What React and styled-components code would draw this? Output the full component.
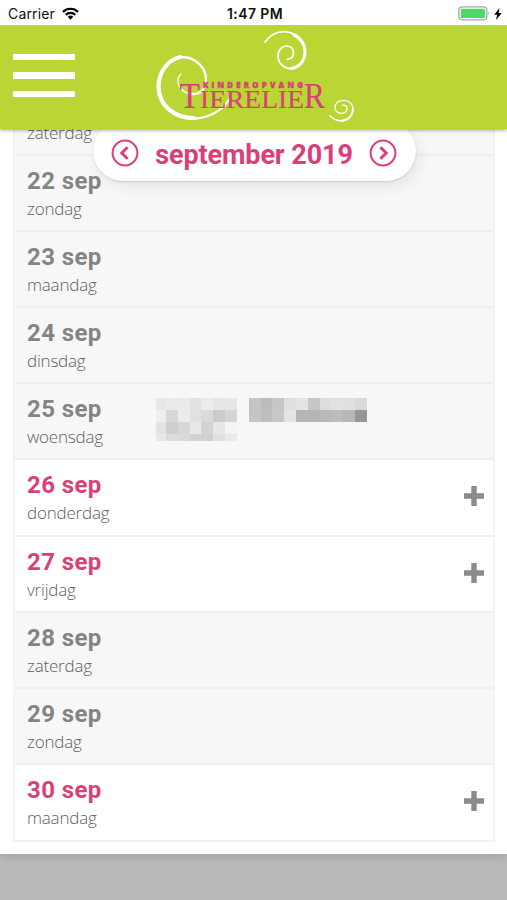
import styled, { createGlobalStyle } from 'styled-components';

const GlobalStyle = createGlobalStyle`
    * {
        box-sizing: border-box;
    }
    body {
        margin: 0;
        background-color: #bababa;
        font-family: "Open Sans", sans-serif;
    }
`

const Container = styled.div`
    width: 507px;
    height: 900px;
    overflow: hidden;
    display: flex;
    flex-direction: column;
    background-color: #bababa;
`

const StatusBar = styled.div`
    height: 25px;
    flex: none;
    display: grid;
    grid-template-columns: 1fr auto 1fr;
    align-items: center;
    padding: 2px 5px 0 8px;
    background-color: white;
    color: #111;
    font-family: Inter, sans-serif;
    font-size: 14px;
    z-index: 3;
`
const Carrier = styled.div`
    display: flex;
    align-items: center;
    gap: 7px;
    letter-spacing: 0.15px;
`
const Time = styled.div`
    font-weight: 600;
    letter-spacing: 0.4px;
`
const Power = styled.div`
    display: flex;
    align-items: center;
    justify-content: flex-end;
    gap: 4px;
`

const Header = styled.header`
    height: 104px;
    flex: none;
    display: flex;
    background-color: #b9d635;
    box-shadow: 0 1px 4px rgba(0, 0, 0, 0.4);
    z-index: 2;
`
const MenuButton = styled.button`
    width: 62px;
    margin: 29px 0 0 13px;
    padding: 0;
    border: none;
    background: none;
    display: flex;
    flex-direction: column;
    gap: 12px;
`
const MenuLine = styled.span`
    width: 61.5px;
    height: 6.4px;
    background-color: white;
`
const Logo = styled.svg`
    margin-left: 75px;
`

const Main = styled.main`
    height: 725px;
    flex: none;
    position: relative;
    display: flex;
    flex-direction: column;
    justify-content: flex-end;
    padding: 0 12px 12px 13px;
    background-color: white;
    box-shadow: 0 2px 10px rgba(0, 0, 0, 0.16);
`
const MonthPicker = styled.div`
    position: absolute;
    top: -8px;
    left: 93px;
    width: 323px;
    height: 60px;
    padding: 3px 19px 0 18px;
    display: flex;
    align-items: center;
    justify-content: space-between;
    border-radius: 30px;
    background-color: white;
    box-shadow: 0 1px 2px rgba(0, 0, 0, 0.12), 4px 6px 14px rgba(0, 0, 0, 0.07);
    z-index: 1;
`
const Month = styled.h1`
    margin: 4px 0 0;
    color: #db3f78;
    font-family: Roboto, sans-serif;
    font-size: 27px;
    font-weight: 700;
    line-height: 32px;
    letter-spacing: -0.1px;
    white-space: nowrap;
`

const Days = styled.div`
    flex: none;
    border: 2px solid #f3f3f3;
    border-top: none;
`
const Day = styled.div`
    height: ${props => props.$open ? "76.6px" : "76px"};
    display: flex;
    align-items: flex-start;
    padding: 11px 9px 0 12px;
    border-top: 2px solid #efefef;
    background-color: ${props => props.$open ? "white" : "#f7f7f7"};
`
const DayInfo = styled.div`
    width: 129px;
`
const DayDate = styled.div`
    color: ${props => props.$open ? "#db3f78" : "#848484"};
    font-family: Roboto, sans-serif;
    font-size: 24px;
    font-weight: 700;
    line-height: 28px;
    letter-spacing: 0.4px;
`
const DayName = styled.div`
    margin-top: 2px;
    color: #606060;
    font-size: 17px;
    font-weight: 300;
    line-height: 24px;
    letter-spacing: -0.2px;
`
const AddIcon = styled.svg`
    margin: 15px 0 0 auto;
`

const Names = styled.div`
    display: flex;
    align-items: flex-start;
    gap: 12px;
    margin-top: 3px;
`
const Mosaic = styled.div`
    display: grid;
    grid-template-columns: ${props => props.$columns};
    grid-template-rows: ${props => props.$rows};
`
const Pixel = styled.span`
    background-color: ${props => props.$shade};
`

const days = [
    { date: "21 sep", name: "zaterdag" },
    { date: "22 sep", name: "zondag" },
    { date: "23 sep", name: "maandag" },
    { date: "24 sep", name: "dinsdag" },
    { date: "25 sep", name: "woensdag", masked: true },
    { date: "26 sep", name: "donderdag", open: true },
    { date: "27 sep", name: "vrijdag", open: true },
    { date: "28 sep", name: "zaterdag" },
    { date: "29 sep", name: "zondag" },
    { date: "30 sep", name: "maandag", open: true },
]

const firstName = [
    "#e8e8e8", "#ebebeb", "#eaeaea", "#e1e1e1", "#ececec", "#e6e6e6", "#e7e7e7",
    "#efefef", "#d7d7d7", "#ebebeb", "#e1e1e1", "#dadada", "#cbcbcb", "#d5d5d5",
    "#e3e3e3", "#cfcfcf", "#d7d7d7", "#e9e9e9", "#d3d3d3", "#e7e7e7", "#f4f4f4",
    "#e8e8e8", "#dbdbdb", "#dadada", "#d2d2d2", "#d0d0d0", "#e0e0e0", "#e9e9e9",
]
const lastName = [
    "#c5c5c5", "#bcbcbc", "#c7c7c7", "#dfdfdf", "#e3e3e3", "#c6c6c6", "#dddddd", "#e1e1e1", "#dfdfdf", "#d9d9d9",
    "#c5c5c5", "#bdbdbd", "#c8c8c8", "#e4e4e4", "#b5b5b5", "#b5b5b5", "#bababa", "#bdbdbd", "#b7b7b7", "#969696",
]

const Chevron = ({ d }) => (
    <svg width="28" height="28" viewBox="0 0 28 28" fill="none" stroke="#db3f78">
        <circle cx="14" cy="14" r="12.4" strokeWidth="2" />
        <path d={d} strokeWidth="3" />
    </svg>
)

const MaskedNames = () => (
    <Names>
        <Mosaic $columns="10px repeat(6, 11.8px)" $rows="11.5px 12px 12px 7px">
            {firstName.map((shade, i) => <Pixel key={i} $shade={shade} />)}
        </Mosaic>
        <Mosaic $columns="repeat(10, 11.8px)" $rows="11.5px 12px">
            {lastName.map((shade, i) => <Pixel key={i} $shade={shade} />)}
        </Mosaic>
    </Names>
)

const App = () => {
    return (
        <>
            <GlobalStyle />
            <Container>
                <StatusBar>
                    <Carrier>
                        Carrier
                        <svg width="17" height="13" viewBox="0 0 17 13" fill="none" stroke="#000" strokeWidth="2.2">
                            <path d="M0.9 4.9a10.8 10.8 0 0 1 15.2 0" />
                            <path d="M3.7 7.9a6.8 6.8 0 0 1 9.6 0" />
                            <path d="M8.5 12.7L5.7 9.8a4 4 0 0 1 5.6 0z" fill="#000" stroke="none" />
                        </svg>
                    </Carrier>
                    <Time>1:47 PM</Time>
                    <Power>
                        <svg width="32" height="15" viewBox="0 0 32 15">
                            <rect x="0.8" y="0.8" width="28" height="13" rx="3.2" fill="#fff" stroke="#a5a5a5" strokeWidth="1.3" />
                            <rect x="2.7" y="2.7" width="24.2" height="9.2" rx="1" fill="#4cd964" />
                            <path d="M30.2 5q1.8 2.4 0 4.8z" fill="#a5a5a5" />
                        </svg>
                        <svg width="8" height="12" viewBox="0 0 8 12">
                            <path d="M5.6 0L0.2 6.8h3L2 12l5.8-7H4.6z" fill="#000" />
                        </svg>
                    </Power>
                </StatusBar>
                <Header>
                    <MenuButton>
                        <MenuLine />
                        <MenuLine />
                        <MenuLine />
                    </MenuButton>
                    <Logo width="210" height="104" viewBox="150 25 210 104">
                        <g fill="none" stroke="#fff" strokeLinecap="round">
                            <path d="M180 57C167 60 158.5 73 158.5 87C159 105 174 118.5 194 118" strokeWidth="4.2" />
                            <path d="M176 58.5C190 54 206 64 206 80C206 89 200 94.5 192 94" strokeWidth="2.4" />
                            <path d="M195 94C186 95 178 89 178 81C178 78 179 75.5 181 74" strokeWidth="1.3" />
                            <path d="M188 118.5C206 120 223 111 230 98" strokeWidth="2.2" />
                            <path d="M265 42C270 35 276 32 283 31.6C296 31.5 305 41 305 51" strokeWidth="1.6" />
                            <path d="M294 35C301 38 305 45 305 51C305 60 300 67.5 291 68.5" strokeWidth="3" />
                            <path d="M293 68.5C284 69.5 278 63 278 56C278 50 282 45.8 287 46C291 46.2 293.5 49 293.5 53C293.5 57 291 59 287 59.5" strokeWidth="1.7" />
                            <path d="M329.5 115.5C333 119.5 338 121 343 120.5C349 120 353 115 353 110C353 104 349 100.3 343 100.3C338 100.3 334.8 104 334.8 108C334.8 111 338 113.5 342 113.3C345 113 347 111 347 108.5C347 106 345 104.8 342.5 105.2" strokeWidth="1.3" />
                            <path d="M340 121C348 121 353 115 353 109" strokeWidth="1.9" />
                        </g>
                        <g fill="#db3f78" stroke="#db3f78">
                            <text x="203" y="88.3" fontFamily="Open Sans" fontWeight="800" fontSize="7.8" strokeWidth="0.4" textLength="100">KINDEROPVANG</text>
                            <g fontFamily="Liberation Serif" strokeWidth="0.2">
                                <text x="179.5" y="108" fontSize="36" textLength="20.5" lengthAdjust="spacingAndGlyphs">T</text>
                                <text x="200" y="108" fontSize="26" textLength="104" lengthAdjust="spacingAndGlyphs">IERELIE</text>
                                <text x="304" y="108" fontSize="36" textLength="21" lengthAdjust="spacingAndGlyphs">R</text>
                            </g>
                        </g>
                    </Logo>
                </Header>
                <Main>
                    <MonthPicker>
                        <Chevron d="M16.6 8.2l-5.8 5.8 5.8 5.8" />
                        <Month>september 2019</Month>
                        <Chevron d="M11.4 8.2l5.8 5.8-5.8 5.8" />
                    </MonthPicker>
                    <Days>
                        {days.map(day => (
                            <Day key={day.date} $open={day.open}>
                                <DayInfo>
                                    <DayDate $open={day.open}>{day.date}</DayDate>
                                    <DayName>{day.name}</DayName>
                                </DayInfo>
                                {day.masked && <MaskedNames />}
                                {day.open && (
                                    <AddIcon width="20" height="20" viewBox="0 0 20 20">
                                        <path d="M7.3 0h5.4v7.3H20v5.4h-7.3V20H7.3v-7.3H0V7.3h7.3z" fill="#8b8b8b" />
                                    </AddIcon>
                                )}
                            </Day>
                        ))}
                    </Days>
                </Main>
            </Container>
        </>
    )
}

export default App
